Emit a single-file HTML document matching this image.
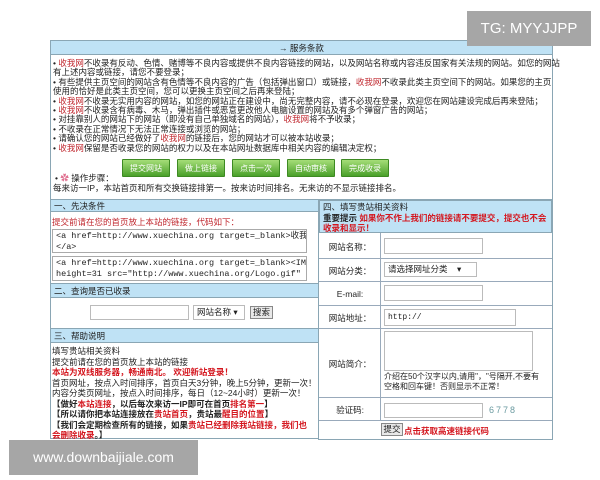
<!DOCTYPE html>
<html><head><meta charset="utf-8"><style>
*{margin:0;padding:0;box-sizing:border-box}
body{width:600px;height:480px;background:#fff;position:relative;overflow:hidden;font-family:"Liberation Sans","Noto Sans CJK SC",sans-serif;font-size:9px;color:#222}
.a{position:absolute}
.hd{background:#bfe2f5;border:1px solid #8aa6b4}
.r{color:#c0282f}
.rb{color:#d4161e;font-weight:bold}
.ln{line-height:10.5px;white-space:nowrap}
.btn{position:absolute;top:159px;height:18px;width:48px;background:linear-gradient(#a5dd78,#4aa02a);color:#fff;font-size:8px;text-align:center;line-height:18px;border:1px solid #3d8a22;border-radius:1px}
.ta{position:absolute;background:#fff;border:1px solid #aaa;font-family:"Liberation Mono","Noto Sans CJK SC",monospace;font-size:8.5px;line-height:11px;padding:1px 3px;white-space:nowrap;overflow:hidden}
.in{position:absolute;background:#fff;border:1px solid #bbb}
.lb{position:absolute;left:320px;width:60px;text-align:center;font-size:8.5px}
.hr{position:absolute;left:319px;width:233px;height:1px;background:#9ab}
</style></head><body>
<div class="a" style="left:50px;top:40px;width:503px;height:160px;border:1px solid #8aa6b4;border-top:none"></div>
<div class="a hd" style="left:50px;top:40px;width:503px;height:15px;text-align:center;line-height:14px;font-size:8.5px">→ 服务条款</div>
<div class="a ln" style="left:53px;top:59px;font-size:8.5px;line-height:9.4px">
• <span class="r">收我网</span>不收录有反动、色情、赌博等不良内容或提供不良内容链接的网站，以及网站名称或内容违反国家有关法规的网站。如您的网站<br>有上述内容或链接，请您不要登录；<br>
• 有些提供主页空间的网站含有色情等不良内容的广告（包括弹出窗口）或链接，<span class="r">收我网</span>不收录此类主页空间下的网站。如果您的主页<br>使用的恰好是此类主页空间，您可以更换主页空间之后再来登陆；<br>
• <span class="r">收我网</span>不收录无实用内容的网站，如您的网站正在建设中，尚无完整内容，请不必现在登录，欢迎您在网站建设完成后再来登陆；<br>
• <span class="r">收我网</span>不收录含有病毒、木马，弹出插件或恶意更改他人电脑设置的网站及有多个弹窗广告的网站；<br>
• 对挂靠别人的网站下的网站（即没有自己单独域名的网站），<span class="r">收我网</span>将不予收录；<br>
• 不收录在正常情况下无法正常连接或浏览的网站；<br>
• 请确认您的网站已经做好了<span class="r">收我网</span>的链接后，您的网站才可以被本站收录；<br>
• <span class="r">收我网</span>保留是否收录您的网站的权力以及在本站网址数据库中相关内容的编辑决定权；</div>
<div class="a" style="left:55px;top:172px;font-size:8.5px">• <span style="color:#e07090">✿</span> 操作步骤：</div>
<div class="btn" style="left:122px">提交网站</div>
<div class="btn" style="left:177px">做上链接</div>
<div class="btn" style="left:232px">点击一次</div>
<div class="btn" style="left:287px">自动审核</div>
<div class="btn" style="left:341px">完成收录</div>
<div class="a" style="left:53px;top:182px;font-size:8.5px">每来访一IP，本站首页和所有交换链接排第一。按来访时间排名。无来访的不显示链接排名。</div>

<!-- left col -->
<div class="a" style="left:50px;top:199px;width:269px;height:240px;border:1px solid #8aa6b4"></div>
<div class="a hd" style="left:50px;top:199px;width:269px;height:13px;line-height:12px;padding-left:3px;font-size:8.5px">一、先决条件</div>
<div class="a r" style="left:52px;top:216px;font-size:8.5px">提交前请在您的首页放上本站的链接，代码如下：</div>
<div class="ta" style="left:52px;top:229px;width:255px;height:24px">&lt;a href=http://www.xuechina.org target=_blank&gt;收我网<br>&lt;/a&gt;</div>
<div class="ta" style="left:52px;top:256px;width:255px;height:25px">&lt;a href=http://www.xuechina.org target=_blank&gt;&lt;IMG<br>height=31 src="http://www.xuechina.org/Logo.gif"</div>
<div class="a hd" style="left:50px;top:283px;width:269px;height:15px;line-height:14px;padding-left:3px;font-size:8.5px">二、查询是否已收录</div>
<div class="in" style="left:90px;top:305px;width:99px;height:15px"></div>
<div class="in" style="left:193px;top:305px;width:52px;height:15px;padding-left:3px;line-height:13px;font-size:8.5px">网站名称 ▾</div>
<div class="in" style="left:250px;top:306px;width:23px;height:13px;background:#e8e8e8;border-color:#888;text-align:center;line-height:11px;font-size:8.5px">搜索</div>
<div class="a hd" style="left:50px;top:328px;width:269px;height:15px;line-height:14px;padding-left:3px;font-size:8.5px">三、帮助说明</div>
<div class="a ln" style="left:52px;top:346px;font-size:8.5px">填写贵站相关资料<br>提交前请在您的首页放上本站的链接<br>
<span class="rb">本站为双线服务器，畅通南北。 欢迎新站登录！</span><br>
首页网址，按点入时间排序，首页白天3分钟，晚上5分钟，更新一次！<br>
内容分类页网址，按点入时间排序，每日（12~24小时）更新一次！<br>
<b>【做好<span class="rb">本站连接</span>，以后每次来访一IP即可在首页<span class="rb">排名第一</span>】</b><br>
<b>【所以请你把本站连接放在<span class="rb">贵站首页</span>，贵站最<span class="rb">醒目的位置</span>】</b><br>
<b>【我们会定期检查所有的链接，如果<span class="rb">贵站已经删除我站链接，我们也</span></b><br>
<b><span class="rb">会删除收录</span>。】</b></div>

<!-- right col -->
<div class="a" style="left:318px;top:199px;width:235px;height:241px;border:1px solid #8aa6b4"></div>
<div class="a hd" style="left:319px;top:200px;width:233px;height:33px;padding:1px 3px;line-height:10.5px;font-size:8.5px">四、填写贵站相关资料<br><b>重要提示</b> <span class="rb">如果你不作上我们的链接请不要提交，提交也不会收录和显示！</span></div>
<div class="a" style="left:380px;top:233px;width:1px;height:188px;background:#9ab"></div>
<div class="hr" style="top:258px"></div><div class="hr" style="top:281px"></div><div class="hr" style="top:305px"></div><div class="hr" style="top:328px"></div><div class="hr" style="top:397px"></div><div class="hr" style="top:420px"></div>
<div class="lb" style="top:241px">网站名称：</div>
<div class="lb" style="top:265px">网站分类：</div>
<div class="lb" style="top:289px">E-mail:</div>
<div class="lb" style="top:312px">网站地址：</div>
<div class="lb" style="top:358px">网站简介：</div>
<div class="lb" style="top:404px">验证码:</div>
<div class="in" style="left:384px;top:238px;width:99px;height:16px"></div>
<div class="in" style="left:384px;top:262px;width:93px;height:15px;padding-left:3px;line-height:13px;font-size:8.5px">请选择网址分类 &nbsp; &nbsp;▾</div>
<div class="in" style="left:384px;top:285px;width:99px;height:16px"></div>
<div class="in" style="left:384px;top:309px;width:132px;height:17px;padding-left:3px;line-height:15px;font-family:'Liberation Mono',monospace;font-size:8px">http://</div>
<div class="in" style="left:384px;top:331px;width:149px;height:40px"></div>
<div class="a" style="left:384px;top:372px;line-height:10px;font-size:8px">介绍在50个汉字以内,请用"，"号隔开,不要有<br>空格和回车键！否则显示不正常！</div>
<div class="in" style="left:384px;top:403px;width:99px;height:15px"></div>
<div class="a" style="left:489px;top:405px;color:#6a9aa0;font-size:9px;letter-spacing:2px">6778</div>
<div class="in" style="left:381px;top:423px;width:22px;height:13px;background:#e8e8e8;border-color:#888;text-align:center;line-height:11px;font-size:8.5px">提交</div>
<div class="a rb" style="left:404px;top:425px;font-size:8.5px">点击获取高速链接代码</div>

<div class="a" style="left:467px;top:11px;width:124px;height:35px;background:#a6a6a6;color:#fff;font-size:15px;text-align:center;line-height:35px">TG: MYYJJPP</div>
<div class="a" style="left:9px;top:440px;width:189px;height:35px;background:#a6a6a6;color:#fff;font-size:14px;text-align:center;line-height:35px">www.downbaijiale.com</div>
</body></html>
